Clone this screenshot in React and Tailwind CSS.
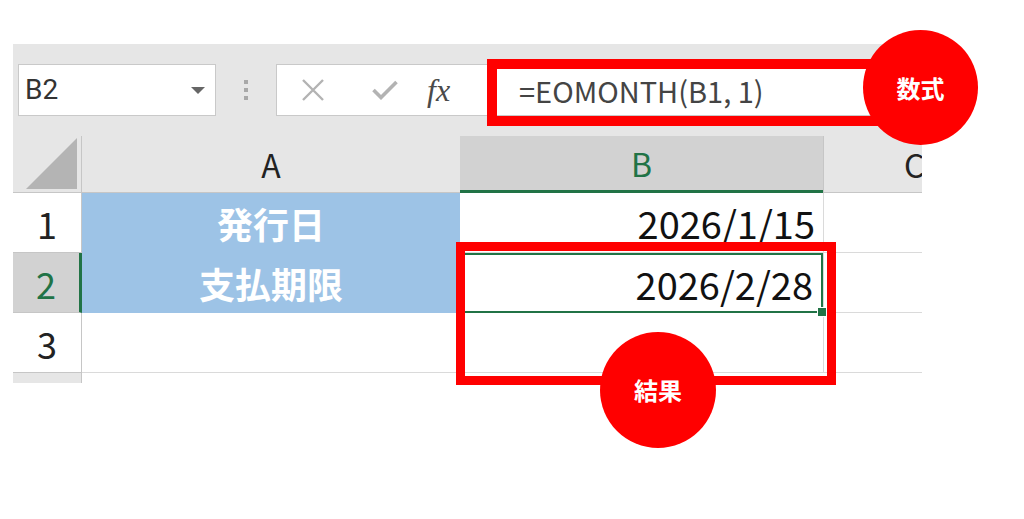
import React from 'react';

const jp = { fontFamily: '"Noto Sans CJK JP", "Noto Sans", sans-serif' };

const rows = [
  { n: '1', label: '発行日', value: '2026/1/15' },
  { n: '2', label: '支払期限', value: '2026/2/28', selected: true },
  { n: '3', label: '', value: '' },
];

const Toolbar = () => (
  <div className="h-[92px] flex items-start pt-[20px] pl-[5px]">
    {/* Name box */}
    <div className="w-[198px] h-[52px] bg-white border border-[#c9c9c9] flex items-center justify-between pl-[6px] pr-[10px]">
      <span className="text-[28px] text-[#333] leading-none" style={{ fontFamily: 'Roboto, "Noto Sans", sans-serif' }}>B2</span>
      <svg width="14" height="7" viewBox="0 0 14 7"><path d="M0 0 L14 0 L7 7 Z" fill="#666" /></svg>
    </div>
    {/* Dots */}
    <div className="w-[60px] h-[52px] flex flex-col items-center justify-center gap-[4px]">
      <span className="w-[4px] h-[4px] bg-[#a8a8a8]" />
      <span className="w-[4px] h-[4px] bg-[#a8a8a8]" />
      <span className="w-[4px] h-[4px] bg-[#a8a8a8]" />
    </div>
    {/* Formula buttons */}
    <div className="w-[211px] h-[52px] bg-white border border-[#c9c9c9] border-r-0 flex items-center">
      <div className="w-[48px] ml-[12px] flex justify-center">
        <svg width="24" height="22" viewBox="0 0 24 22">
          <path d="M2 1 L22 21 M22 1 L2 21" stroke="#b3b3b3" strokeWidth="2.4" />
        </svg>
      </div>
      <div className="w-[48px] ml-[24px] flex justify-center">
        <svg width="26" height="20" viewBox="0 0 26 20">
          <path d="M1.5 10 L9 17.5 L24.5 2" stroke="#b3b3b3" strokeWidth="3.6" fill="none" />
        </svg>
      </div>
      <div className="ml-[18px] text-[32px] italic text-[#4a4a4a] leading-none" style={{ fontFamily: '"Liberation Serif", serif' }}>fx</div>
    </div>
    {/* Formula field */}
    <div className="flex-1 h-[52px] bg-white border-y border-[#c9c9c9] flex items-center pl-[32px]">
      <span className="text-[29px] text-[#444] leading-none" style={jp}>=EOMONTH(B1, 1)</span>
    </div>
  </div>
);

const HeaderRow = () => (
  <div className="h-[57px] flex">
    <div className="w-[69px] h-full border-r border-[#c6c6c6] border-b border-b-[#c6c6c6] flex items-end justify-end pr-[4px] pb-[3px]">
      <svg width="51" height="51" viewBox="0 0 51 51"><path d="M0 51 L51 51 L51 0 Z" fill="#b4b4b4" /></svg>
    </div>
    <div className="w-[378px] h-full border-b border-[#c6c6c6] flex items-center justify-center text-[32px] text-[#222]" style={jp}>A</div>
    <div className="w-[363px] h-full bg-[#d2d2d2] border-b-[3px] border-[#217346] flex items-center justify-center text-[32px] text-[#217346]" style={jp}>B</div>
    <div className="w-[99px] h-full border-l border-[#c6c6c6] border-b border-b-[#c6c6c6] overflow-hidden flex items-center text-[32px] text-[#222] pl-[80px]" style={jp}>C</div>
  </div>
);

const GridRow = ({ n, label, value, selected }) => (
  <div className="h-[60px] flex">
    <div
      className={`w-[69px] h-full border-b border-[#c6c6c6] flex items-center justify-center text-[36px] ${
        selected ? 'bg-[#d2d2d2] text-[#217346] border-r-[3px] border-r-[#217346]' : 'text-[#222] border-r border-r-[#c6c6c6]'
      }`}
      style={jp}
    >
      {n}
    </div>
    <div
      className={`w-[378px] h-full flex items-center justify-center text-[36px] font-bold text-white ${
        label ? 'bg-[#9dc3e6]' : 'bg-white border-b border-[#dadada]'
      }`}
      style={jp}
    >
      {label}
    </div>
    <div
      className={`w-[363px] h-full bg-white flex items-center justify-end pr-[8px] text-[38px] text-[#111] ${
        selected ? 'relative z-10 border-2 border-[#217346] border-l-0' : 'border-b border-[#dadada]'
      }`}
      style={jp}
    >
      {value}
      {selected && (
        <span className="absolute right-[-6px] bottom-[-6px] w-[10px] h-[10px] bg-[#217346] border border-white" />
      )}
    </div>
    <div className="w-[99px] h-full bg-white border-l border-[#dadada] border-b border-b-[#dadada]" />
  </div>
);

export default function App() {
  return (
    <div className="relative w-[1024px] h-[519px] bg-white overflow-hidden">
      <div className="pt-[44px] pl-[13px]">
        <div className="w-[909px]">
          <div className="bg-[#e6e6e6]">
            <Toolbar />
            <HeaderRow />
          </div>
          {rows.map((r) => (
            <GridRow key={r.n} {...r} />
          ))}
          <div className="h-[10px] flex">
            <div className="w-[69px] h-full bg-[#e6e6e6] border-r border-[#c6c6c6]" />
          </div>
        </div>
      </div>

      {/* Annotations */}
      <div className="absolute z-20 left-[487px] top-[59px] w-[400px] h-[67px] border-[10px] border-[#ff0000]" />
      <div className="absolute z-20 left-[863px] top-[30px] w-[115px] h-[115px] rounded-full bg-[#ff0000] flex items-center justify-center text-white text-[24px] font-bold" style={jp}>
        数式
      </div>
      <div className="absolute z-20 left-[456px] top-[242px] w-[380px] h-[143px] border-[9px] border-[#ff0000]" />
      <div className="absolute z-20 left-[600px] top-[332px] w-[116px] h-[116px] rounded-full bg-[#ff0000] flex items-center justify-center text-white text-[24px] font-bold" style={jp}>
        結果
      </div>
    </div>
  );
}
